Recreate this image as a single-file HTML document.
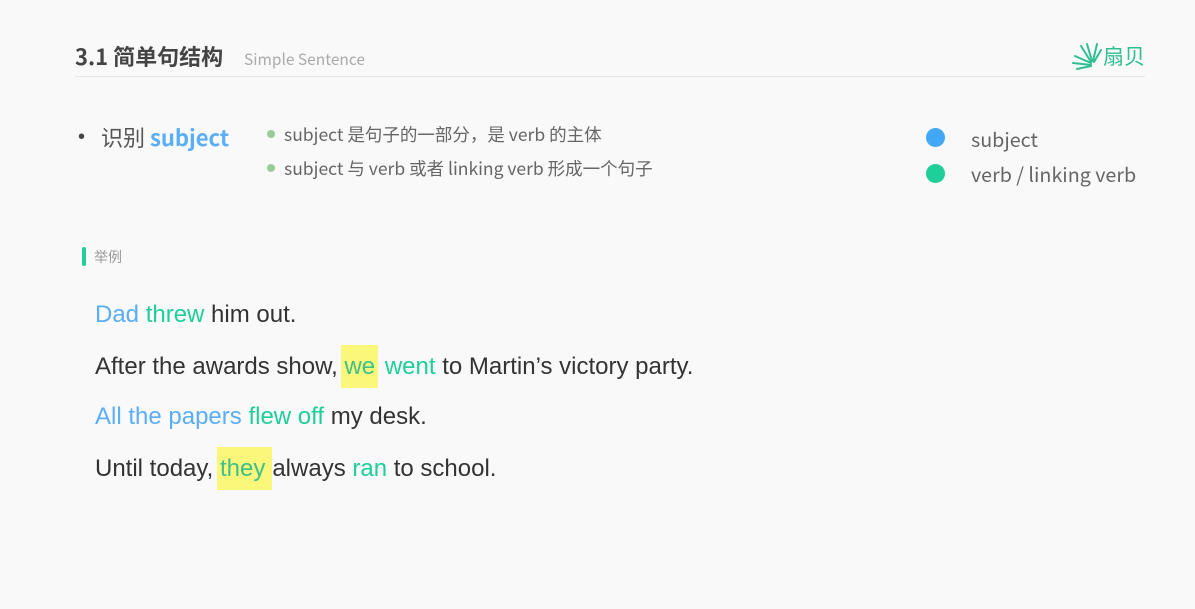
<!DOCTYPE html>
<html><head><meta charset="utf-8"><style>
body{margin:0;width:1195px;height:609px;background:#f9f9f9;position:relative;overflow:hidden;font-family:"Liberation Sans","Noto Sans CJK SC",sans-serif;}
.a{position:absolute;white-space:nowrap}
.b{color:#5aaef5}.g{color:#1ecf9a}
.hl{background:#fbf77a;color:#3fbf8a;padding:8px 3px;margin-left:-3px}
.s{font-size:24px;color:#333;left:95px}
.cj{font-family:'Noto Sans CJK SC',sans-serif}
.dot{display:inline-block;width:8px;height:8px;border-radius:50%;background:#9c9;margin-right:9px;vertical-align:middle;position:relative;top:-2px}
</style></head><body>
<div class="a cj" style="left:75px;top:40px;font-size:22px;color:#444;font-weight:bold">3.1 简单句结构</div>
<div class="a cj" style="left:244px;top:48px;font-size:15.5px;color:#aaa">Simple Sentence</div>
<div class="a" style="left:75px;top:76px;width:1070px;height:1px;background:#e6e6e6"></div>
<svg class="a" style="left:1071px;top:42px" width="32" height="28" viewBox="0 0 32 28" fill="none" stroke="#2fbf92" stroke-width="2" stroke-linecap="round"><path d="M4 14L20 21M2 21L20 23M6 27L20 24M10 4L20 20M16 2L21 19M26 2L22 19M30 8L23 20"/></svg>
<div class="a cj" style="left:1103px;top:41px;font-size:21px;color:#2fbf92">扇贝</div>
<div class="a" style="left:78px;top:126px;font-size:20px;color:#444">•</div>
<div class="a cj" style="left:101px;top:121px;font-size:22px;color:#555">识别 <span style="font-weight:bold;color:#5aaef5">subject</span></div>
<div class="a cj" style="left:267px;top:122px;font-size:17.5px;color:#666"><span class="dot"></span>subject 是句子的一部分，是 verb 的主体</div>
<div class="a cj" style="left:267px;top:156px;font-size:17.5px;color:#666"><span class="dot"></span>subject 与 verb 或者 linking verb 形成一个句子</div>
<div class="a" style="left:926px;top:128px;width:19px;height:19px;border-radius:50%;background:#42a8f5"></div>
<div class="a" style="left:926px;top:164px;width:19px;height:19px;border-radius:50%;background:#1ecf9a"></div>
<div class="a cj" style="left:971px;top:124px;font-size:19.7px;color:#666">subject</div>
<div class="a cj" style="left:971px;top:159px;font-size:19.7px;color:#666">verb / linking verb</div>
<div class="a" style="left:82px;top:247px;width:4px;height:19px;background:#1ecf9a;border-radius:2px"></div>
<div class="a cj" style="left:94px;top:247px;font-size:14px;color:#999">举例</div>
<div class="a s" style="top:301px"><span class="b">Dad</span> <span class="g">threw</span> him out.</div>
<div class="a s" style="top:353px">After the awards show, <span class="hl">we</span> <span class="g">went</span> to Martin’s victory party.</div>
<div class="a s" style="top:403px"><span class="b">All the papers</span> <span class="g">flew off</span> my desk.</div>
<div class="a s" style="top:455px">Until today, <span class="hl" style="padding-right:7px">they</span>always <span class="g">ran</span> to school.</div>
</body></html>
